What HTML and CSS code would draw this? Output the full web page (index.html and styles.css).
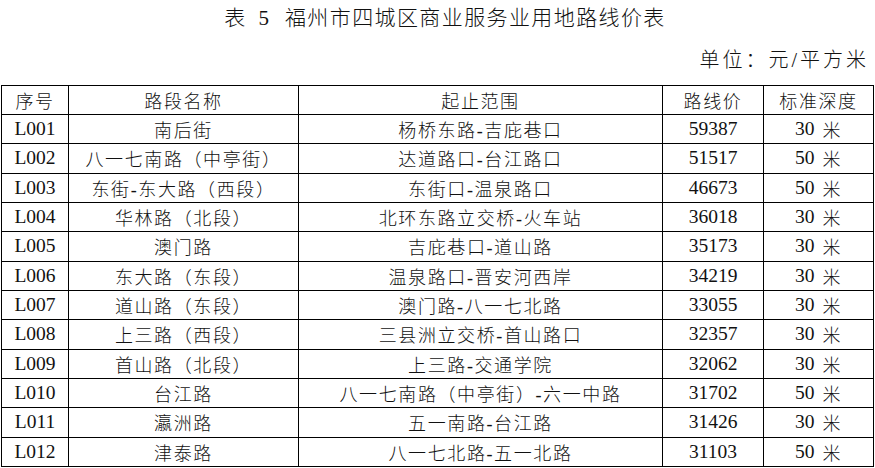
FILE: index.html
```html
<!DOCTYPE html>
<html lang="zh-CN">
<head>
<meta charset="utf-8">
<link rel="stylesheet" href="styles.css">
</head>
<body>
<div class="page">
  <h1 class="title"><span class="tno">表 5</span>福州市四城区商业服务业用地路线价表</h1>
  <div class="unit">单位：元/平方米</div>
  <div class="table">
    <div class="c">序号</div><div class="c">路段名称</div><div class="c">起止范围</div><div class="c">路线价</div><div class="c">标准深度</div>
    <div class="c n">L001</div><div class="c">南后街</div><div class="c">杨桥东路-吉庇巷口</div><div class="c n">59387</div><div class="c"><span class="d">30</span>米</div>
    <div class="c n">L002</div><div class="c">八一七南路（中亭街）</div><div class="c">达道路口-台江路口</div><div class="c n">51517</div><div class="c"><span class="d">50</span>米</div>
    <div class="c n">L003</div><div class="c">东街-东大路（西段）</div><div class="c">东街口-温泉路口</div><div class="c n">46673</div><div class="c"><span class="d">50</span>米</div>
    <div class="c n">L004</div><div class="c">华林路（北段）</div><div class="c">北环东路立交桥-火车站</div><div class="c n">36018</div><div class="c"><span class="d">30</span>米</div>
    <div class="c n">L005</div><div class="c">澳门路</div><div class="c">吉庇巷口-道山路</div><div class="c n">35173</div><div class="c"><span class="d">30</span>米</div>
    <div class="c n">L006</div><div class="c">东大路（东段）</div><div class="c">温泉路口-晋安河西岸</div><div class="c n">34219</div><div class="c"><span class="d">30</span>米</div>
    <div class="c n">L007</div><div class="c">道山路（东段）</div><div class="c">澳门路-八一七北路</div><div class="c n">33055</div><div class="c"><span class="d">30</span>米</div>
    <div class="c n">L008</div><div class="c">上三路（西段）</div><div class="c">三县洲立交桥-首山路口</div><div class="c n">32357</div><div class="c"><span class="d">30</span>米</div>
    <div class="c n">L009</div><div class="c">首山路（北段）</div><div class="c">上三路-交通学院</div><div class="c n">32062</div><div class="c"><span class="d">30</span>米</div>
    <div class="c n">L010</div><div class="c">台江路</div><div class="c">八一七南路（中亭街）-六一中路</div><div class="c n">31702</div><div class="c"><span class="d">50</span>米</div>
    <div class="c n">L011</div><div class="c">瀛洲路</div><div class="c">五一南路-台江路</div><div class="c n">31426</div><div class="c"><span class="d">30</span>米</div>
    <div class="c n">L012</div><div class="c">津泰路</div><div class="c">八一七北路-五一北路</div><div class="c n">31103</div><div class="c"><span class="d">50</span>米</div>
  </div>
</div>
</body>
</html>
```
FILE: styles.css
```css
html, body {
  margin: 0;
  padding: 0;
  background: #fff;
}
.page {
  width: 875px;
  padding: 0 0 0 1px;
  box-sizing: border-box;
  font-family: "Liberation Serif", "Noto Sans CJK SC", serif;
  font-weight: 300;
  color: #111;
}
.title {
  margin: 0;
  padding-top: 6px;
  height: 30px;
  box-sizing: border-box;
  font-size: 21px;
  font-weight: 300;
  line-height: 24px;
  text-align: center;
  letter-spacing: 1.4px;
  padding-left: 14px;
}
.tno {
  margin-right: 12px;
  letter-spacing: 4px;
}
.unit {
  margin-top: 16px;
  height: 30px;
  font-size: 20px;
  line-height: 28px;
  text-align: right;
  padding-right: 6px;
  letter-spacing: 3px;
}
.table {
  margin-top: 9px;
  width: 873px;
  display: grid;
  grid-template-columns: 67px 230px 364px 101px 110px;
  grid-template-rows: 29px repeat(12, 29.33px);
  border-left: 1px solid #000;
  border-top: 1px solid #000;
  box-sizing: border-box;
}
.c {
  border-right: 1px solid #000;
  border-bottom: 1px solid #000;
  display: flex;
  align-items: center;
  justify-content: center;
  font-size: 18px;
  letter-spacing: 1.6px;
  white-space: nowrap;
  overflow: hidden;
}
.n {
  letter-spacing: 0;
  font-size: 19.5px;
}
.d {
  font-size: 19.5px;
  letter-spacing: 0;
  margin-right: 8px;
}
```
